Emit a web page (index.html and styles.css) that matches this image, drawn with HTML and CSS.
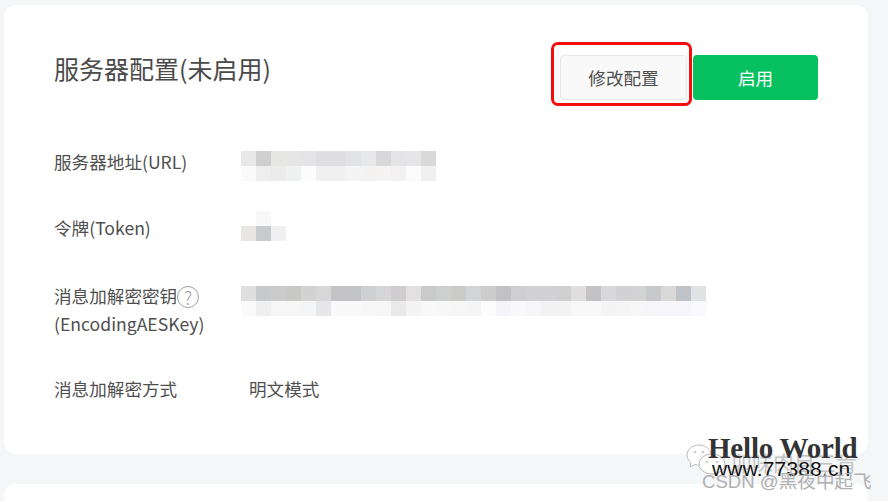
FILE: index.html
```html
<!DOCTYPE html>
<html lang="zh-CN">
<head>
<meta charset="utf-8">
<title>服务器配置</title>
<link rel="stylesheet" href="styles.css">
</head>
<body>
<main class="page">
  <section class="card">
    <header class="head">
      <h1 class="title">服务器配置(未启用)</h1>
      <div class="actions">
        <button class="btn btn-default" type="button">修改配置</button>
        <button class="btn btn-primary" type="button">启用</button>
      </div>
    </header>

    <div class="row row-url">
      <div class="label">服务器地址(URL)</div>
      <svg class="mosaic mosaic-url" width="195" height="30" viewBox="0 0 13 2" shape-rendering="crispEdges" aria-hidden="true">
        <rect x="0" y="0" width="1" height="1" fill="#e8e8e9"/><rect x="1" y="0" width="1" height="1" fill="#cfcfd0"/><rect x="2" y="0" width="1" height="1" fill="#e6e6e5"/><rect x="3" y="0" width="1" height="1" fill="#e6e6e6"/><rect x="4" y="0" width="1" height="1" fill="#e4e4e6"/><rect x="5" y="0" width="1" height="1" fill="#dfdee0"/><rect x="6" y="0" width="1" height="1" fill="#dfdee0"/><rect x="7" y="0" width="1" height="1" fill="#e2e3e6"/><rect x="8" y="0" width="1" height="1" fill="#e8e8ea"/><rect x="9" y="0" width="1" height="1" fill="#d8d8d9"/><rect x="10" y="0" width="1" height="1" fill="#e4e4e7"/><rect x="11" y="0" width="1" height="1" fill="#e6e6e8"/><rect x="12" y="0" width="1" height="1" fill="#d9d9da"/>
        <rect x="0" y="1" width="1" height="1" fill="#fafafa"/><rect x="1" y="1" width="1" height="1" fill="#eeeeee"/><rect x="2" y="1" width="1" height="1" fill="#ebebeb"/><rect x="3" y="1" width="1" height="1" fill="#eff0f0"/><rect x="4" y="1" width="1" height="1" fill="#fcfcfc"/><rect x="5" y="1" width="1" height="1" fill="#f0f0f1"/><rect x="6" y="1" width="1" height="1" fill="#f0f0f1"/><rect x="7" y="1" width="1" height="1" fill="#f4f4f5"/><rect x="8" y="1" width="1" height="1" fill="#f2f2f3"/><rect x="9" y="1" width="1" height="1" fill="#f5f4f3"/><rect x="10" y="1" width="1" height="1" fill="#f2f1f2"/><rect x="11" y="1" width="1" height="1" fill="#fbfbfb"/><rect x="12" y="1" width="1" height="1" fill="#f0f0f0"/>
      </svg>
    </div>

    <div class="row row-token">
      <div class="label">令牌(Token)</div>
      <svg class="mosaic mosaic-token" width="45" height="30" viewBox="0 0 3 2" shape-rendering="crispEdges" aria-hidden="true">
        <rect x="1" y="0" width="1" height="1" fill="#f8f8f8"/>
        <rect x="0" y="1" width="1" height="1" fill="#e8e7e6"/><rect x="1" y="1" width="1" height="1" fill="#c9cacb"/><rect x="2" y="1" width="1" height="1" fill="#f0f0f3"/>
      </svg>
    </div>

    <div class="row row-key">
      <div class="label">
        <div class="label-line">消息加解密密钥<span class="help">?</span></div>
        <div>(EncodingAESKey)</div>
      </div>
      <svg class="mosaic mosaic-key" width="465" height="30" viewBox="0 0 31 2" shape-rendering="crispEdges" aria-hidden="true">
        <rect x="0" y="0" width="1" height="1" fill="#dfdfe0"/><rect x="1" y="0" width="1" height="1" fill="#c8c9cb"/><rect x="2" y="0" width="1" height="1" fill="#cbcbcc"/><rect x="3" y="0" width="1" height="1" fill="#c8c8c6"/><rect x="4" y="0" width="1" height="1" fill="#d2d2d3"/><rect x="5" y="0" width="1" height="1" fill="#d8d8d8"/><rect x="6" y="0" width="1" height="1" fill="#c4c3c5"/><rect x="7" y="0" width="1" height="1" fill="#c4c3c5"/><rect x="8" y="0" width="1" height="1" fill="#cfd0d2"/><rect x="9" y="0" width="1" height="1" fill="#d6d6d6"/><rect x="10" y="0" width="1" height="1" fill="#cfcdd0"/><rect x="11" y="0" width="1" height="1" fill="#e2e1e0"/><rect x="12" y="0" width="1" height="1" fill="#cbcacb"/><rect x="13" y="0" width="1" height="1" fill="#cecfcf"/><rect x="14" y="0" width="1" height="1" fill="#cbcbca"/><rect x="15" y="0" width="1" height="1" fill="#d2d4d6"/><rect x="16" y="0" width="1" height="1" fill="#cdcdcd"/><rect x="17" y="0" width="1" height="1" fill="#c2c2c5"/><rect x="18" y="0" width="1" height="1" fill="#cfcfd1"/><rect x="19" y="0" width="1" height="1" fill="#d2d2d4"/><rect x="20" y="0" width="1" height="1" fill="#d2d2d4"/><rect x="21" y="0" width="1" height="1" fill="#d0d0d3"/><rect x="22" y="0" width="1" height="1" fill="#e0dfde"/><rect x="23" y="0" width="1" height="1" fill="#c3c3c6"/><rect x="24" y="0" width="1" height="1" fill="#d8d8dc"/><rect x="25" y="0" width="1" height="1" fill="#d2d1d3"/><rect x="26" y="0" width="1" height="1" fill="#d4d3d4"/><rect x="27" y="0" width="1" height="1" fill="#c8c9cc"/><rect x="28" y="0" width="1" height="1" fill="#dbd9d8"/><rect x="29" y="0" width="1" height="1" fill="#bfc3c8"/><rect x="30" y="0" width="1" height="1" fill="#e1e2e3"/>
        <rect x="0" y="1" width="1" height="1" fill="#fbfafa"/><rect x="1" y="1" width="1" height="1" fill="#efeff0"/><rect x="2" y="1" width="1" height="1" fill="#f6f6f6"/><rect x="3" y="1" width="1" height="1" fill="#f6f6f6"/><rect x="4" y="1" width="1" height="1" fill="#f4f5f6"/><rect x="5" y="1" width="1" height="1" fill="#e7e7ea"/><rect x="6" y="1" width="1" height="1" fill="#f9f9fa"/><rect x="7" y="1" width="1" height="1" fill="#f9f9fa"/><rect x="8" y="1" width="1" height="1" fill="#f7f7f8"/><rect x="9" y="1" width="1" height="1" fill="#f6f6f7"/><rect x="10" y="1" width="1" height="1" fill="#e9e9ea"/><rect x="11" y="1" width="1" height="1" fill="#f4f4f4"/><rect x="12" y="1" width="1" height="1" fill="#f8f8f8"/><rect x="13" y="1" width="1" height="1" fill="#f7f7f7"/><rect x="14" y="1" width="1" height="1" fill="#f6f6f6"/><rect x="15" y="1" width="1" height="1" fill="#f5f5f5"/><rect x="16" y="1" width="1" height="1" fill="#fcfcfc"/><rect x="17" y="1" width="1" height="1" fill="#f5f5f9"/><rect x="18" y="1" width="1" height="1" fill="#f9f9fb"/><rect x="19" y="1" width="1" height="1" fill="#f6f6f8"/><rect x="20" y="1" width="1" height="1" fill="#f3f2f3"/><rect x="21" y="1" width="1" height="1" fill="#f3f3f3"/><rect x="22" y="1" width="1" height="1" fill="#f8f8f8"/><rect x="23" y="1" width="1" height="1" fill="#f9f8f9"/><rect x="24" y="1" width="1" height="1" fill="#f5f4f5"/><rect x="25" y="1" width="1" height="1" fill="#f5f5f6"/><rect x="26" y="1" width="1" height="1" fill="#f7f7f8"/><rect x="27" y="1" width="1" height="1" fill="#f6f6f9"/><rect x="28" y="1" width="1" height="1" fill="#f5f5fa"/><rect x="29" y="1" width="1" height="1" fill="#f6f6fa"/><rect x="30" y="1" width="1" height="1" fill="#fafafc"/>
      </svg>
    </div>

    <div class="row row-mode">
      <div class="label">消息加解密方式</div>
      <div class="value">明文模式</div>
    </div>
  </section>
  <section class="card card-next"></section>
</main>

<div class="highlight"></div>

<div class="watermark">
  <svg class="wm-icon" width="46" height="34" viewBox="0 0 46 34" aria-hidden="true">
    <path d="M13 1C6 1 1 5.500 1 11c0 3 1.500 5.500 4 7.500L4 23l5-2.500c1.300.4 2.700.5 4 .5" fill="#fff" stroke="#bbb" stroke-width="1"/>
    <path d="M13 1c6 0 11 4 12 9" fill="none" stroke="#bbb" stroke-width="1"/>
    <ellipse cx="26" cy="20" rx="13" ry="10" fill="#fff" stroke="#bbb" stroke-width="1"/>
    <circle cx="21" cy="18" r="1.300" fill="#ccc"/><circle cx="31" cy="18" r="1.300" fill="#ccc"/>
    <circle cx="9" cy="8" r="1.300" fill="#ccc"/><circle cx="17" cy="8" r="1.300" fill="#ccc"/>
  </svg>
  <div class="wm-faint">卯味肉目三肯</div>
  <div class="wm-hello">Hello World</div>
  <div class="wm-site">www.77388.cn</div>
  <div class="wm-csdn">CSDN @黑夜中起飞</div>
</div>
</body>
</html>
```

FILE: styles.css
```css
* { box-sizing: border-box; }
html, body { margin: 0; height: 100%; }
body {
  background: #f5f6f8;
  color: #4f4f4f;
  font-family: "Noto Sans CJK SC", "Liberation Sans", sans-serif;
  font-size: 17.600px;
  overflow: hidden;
  position: relative;
}
.page { padding: 5px 20px 0 4px; }
.card {
  background: #fff;
  border-radius: 12px;
  height: 449px;
  padding: 45px 50px 0;
}
.card-next { margin-top: 30px; height: 17px; padding: 0; border-radius: 12px 12px 0 0; }
.head { display: flex; justify-content: space-between; align-items: flex-start; height: 50px; }
.title { margin: 0; font-size: 25px; font-weight: 400; line-height: 36px; color: #4a4a4a; }
.actions { display: flex; gap: 6px; margin-top: 5px; }
.btn {
  font: inherit;
  height: 45px;
  border-radius: 4px;
  cursor: pointer;
}
.btn-default { width: 127px; background: #f9f9f9; border: 1px solid #e6e6e8; color: #4f4f4f; }
.btn-primary { width: 125px; background: #07c160; border: 0; color: #fff; }
.row { display: flex; align-items: flex-start; line-height: 28px; }
.label { flex: 0 0 187px; white-space: nowrap; }
.label-line { display: flex; align-items: center; }
.help {
  display: inline-flex;
  align-items: center;
  justify-content: center;
  width: 22px;
  height: 22px;
  margin-top: 2px;
  border: 1px solid #a0a0a0;
  border-radius: 50%;
  color: #a0a0a0;
  font-size: 18px;
  font-weight: 300;
  line-height: 1;
}
.row-url { margin-top: 48px; }
.row-token { margin-top: 33px; }
.row-key { margin-top: 40px; }
.row-mode { margin-top: 37px; }
.mosaic { display: block; flex: none; }
.mosaic-url { margin-top: 3px; }
.mosaic-token { margin-top: -3px; }
.mosaic-key { margin-top: 4px; }
.value { margin-left: 8px; }
.highlight {
  position: absolute;
  left: 551px;
  top: 42px;
  width: 141px;
  height: 64px;
  border: 3px solid #f40d0d;
  border-radius: 7px;
}
.watermark { position: absolute; left: 0; top: 0; width: 888px; height: 501px; pointer-events: none; }
.wm-icon { position: absolute; left: 686px; top: 444px; }
.wm-faint { position: absolute; left: 731px; top: 449px; font-size: 21px; line-height: 26px; color: #c4c4c4; white-space: nowrap; }
.wm-hello {
  position: absolute;
  left: 708px;
  top: 431px;
  font-family: "Liberation Serif", serif;
  font-weight: 700;
  font-size: 29px;
  line-height: 34px;
  letter-spacing: -0.200px;
  color: #333;
  white-space: nowrap;
}
.wm-site {
  position: absolute;
  left: 712px;
  top: 457px;
  font-family: "Liberation Sans", sans-serif;
  font-size: 21px;
  line-height: 24px;
  letter-spacing: 0.150px;
  color: #111;
  white-space: nowrap;
}
.wm-csdn {
  position: absolute;
  left: 702px;
  top: 470px;
  font-family: "Liberation Sans", "Noto Sans CJK SC", sans-serif;
  font-size: 18.600px;
  line-height: 24px;
  color: #b0b0b0;
  white-space: nowrap;
}
```
